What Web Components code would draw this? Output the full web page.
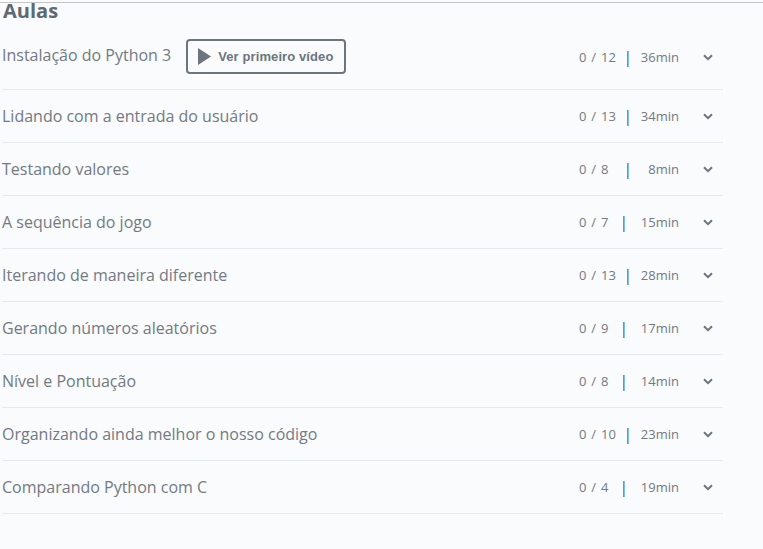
<!DOCTYPE html>
<html lang="pt">
<head>
<meta charset="utf-8">
<title>Aulas</title>
<style>
  html, body { margin: 0; height: 100%; overflow: hidden; }
  body { background: #f9fbfd; font-family: "Open Sans", sans-serif; color: #737a82; }
</style>
</head>
<body>
<course-lessons>
  <lesson-row name="Instalação do Python 3" count="0 / 12" time="36min" preview></lesson-row>
  <lesson-row name="Lidando com a entrada do usuário" count="0 / 13" time="34min"></lesson-row>
  <lesson-row name="Testando valores" count="0 / 8" time="8min"></lesson-row>
  <lesson-row name="A sequência do jogo" count="0 / 7" time="15min" narrow></lesson-row>
  <lesson-row name="Iterando de maneira diferente" count="0 / 13" time="28min"></lesson-row>
  <lesson-row name="Gerando números aleatórios" count="0 / 9" time="17min" narrow></lesson-row>
  <lesson-row name="Nível e Pontuação" count="0 / 8" time="14min" narrow></lesson-row>
  <lesson-row name="Organizando ainda melhor o nosso código" count="0 / 10" time="23min"></lesson-row>
  <lesson-row name="Comparando Python com C" count="0 / 4" time="19min" narrow></lesson-row>
</course-lessons>

<script>
const rowTemplate = document.createElement("template");
rowTemplate.innerHTML = `
<style>
  :host {
    display: flex;
    align-items: center;
    box-sizing: border-box;
    height: 53px;
    border-bottom: 1px solid #e6e9ed;
    font-size: 16px;
  }
  :host([preview]) { padding-bottom: 12px; }
  :host([preview]) .name { margin-bottom: 4px; }
  .name { white-space: nowrap; }
  .preview {
    display: none;
    align-items: center;
    gap: 7px;
    height: 35px;
    width: 160px;
    box-sizing: border-box;
    margin: 0 0 2px 15px;
    padding-left: 10px;
    border: 2px solid #6c757d;
    border-radius: 4px;
    font: bold 13px "Liberation Sans", sans-serif;
    letter-spacing: 0.1px;
    color: #6c757d;
  }
  :host([preview]) .preview { display: flex; }
  .stats {
    display: flex;
    align-items: center;
    margin-left: auto;
    margin-right: 10px;
    font-size: 13px;
  }
  .count { width: 48px; white-space: nowrap; word-spacing: 1.500px; }
  :host([narrow]) .count { width: 44px; }
  .pipe {
    width: 2px;
    height: 16px;
    margin-top: 4px;
    background: linear-gradient(90deg, #a9876a 50%, #7fbcec 50%);
  }
  .time { width: 50px; text-align: right; white-space: nowrap; }
  :host([narrow]) .time { width: 54px; }
  .chevron { width: 10px; height: 7px; margin-left: 24px; }
</style>
<span class="name"></span>
<span class="preview">
  <svg width="13" height="17" viewBox="0 0 13 17"><path d="M0 0 13 8.500 0 17z" fill="#6c757d"/></svg>
  <span>Ver primeiro vídeo</span>
</span>
<span class="stats">
  <span class="count"></span>
  <span class="pipe"></span>
  <span class="time"></span>
  <svg class="chevron" viewBox="0 0 10 7"><path d="M1 1.200 5 5.200 9 1.200" fill="none" stroke="#6c757d" stroke-width="2"/></svg>
</span>`;

class LessonRow extends HTMLElement {
  constructor() {
    super();
    this.attachShadow({ mode: "open" });
    this.shadowRoot.appendChild(rowTemplate.content.cloneNode(true));
  }

  connectedCallback() {
    this.shadowRoot.querySelector(".name").textContent = this.getAttribute("name");
    this.shadowRoot.querySelector(".count").textContent = this.getAttribute("count");
    this.shadowRoot.querySelector(".time").textContent = this.getAttribute("time");
  }
}

customElements.define("lesson-row", LessonRow);

const listTemplate = document.createElement("template");
listTemplate.innerHTML = `
<style>
  :host { display: block; }
  .topline { height: 1px; background: #c4c6c9; margin: 2px 0 -3px; }
  h2 {
    margin: 0;
    height: 37px;
    padding-left: 3px;
    font-size: 20px;
    line-height: 22px;
    font-weight: 700;
    color: #5f6973;
  }
  .rows { width: 721px; margin-left: 2px; }
</style>
<div class="topline"></div>
<h2>Aulas</h2>
<div class="rows"><slot></slot></div>`;

class CourseLessons extends HTMLElement {
  constructor() {
    super();
    this.attachShadow({ mode: "open" });
    this.shadowRoot.appendChild(listTemplate.content.cloneNode(true));
  }
}

customElements.define("course-lessons", CourseLessons);
</script>
</body>
</html>
